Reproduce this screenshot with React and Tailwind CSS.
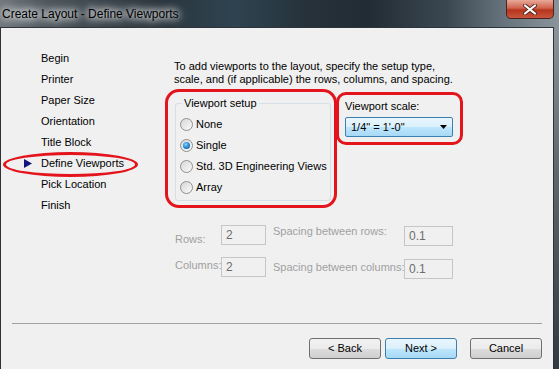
import React from 'react';

const steps = ['Begin', 'Printer', 'Paper Size', 'Orientation', 'Title Block', 'Define Viewports', 'Pick Location', 'Finish'];
const setups = ['None', 'Single', 'Std. 3D Engineering Views', 'Array'];

const Radio = ({ label, checked }) => (
  <div className="flex h-[21px] items-center whitespace-nowrap">
    <div className="flex h-[13px] w-[13px] shrink-0 items-center justify-center rounded-full border border-[#8e8f8f] bg-gradient-to-br from-[#d6d6d6] to-[#fbfbfb]">
      {checked && (
        <div className="h-[7px] w-[7px] rounded-full bg-[radial-gradient(circle_at_40%_35%,#8fd3ff_0%,#2a8fd6_45%,#0b4f8e_100%)]" />
      )}
    </div>
    <span className="ml-[3px]">{label}</span>
  </div>
);

const Field = ({ value, w, className = '' }) => (
  <div className={`flex h-[20px] shrink-0 items-center border border-[#c3c7ca] bg-[#f0f0f0] pl-[4px] text-[12px] text-[#6d6d6d] ${w} ${className}`}>
    {value}
  </div>
);

const WinButton = ({ children, primary }) => (
  <button
    className={`h-[21px] w-[72px] rounded-[3px] border text-[11px] text-black ${
      primary
        ? 'border-[#3c7fb1] bg-[linear-gradient(#eaf6fd_0%,#d9f0fc_50%,#bee6fd_51%,#a7d9f5_100%)]'
        : 'border-[#707070] bg-[linear-gradient(#f2f2f2_0%,#ebebeb_50%,#dddddd_51%,#cfcfcf_100%)]'
    }`}
  >
    {children}
  </button>
);

export default function App() {
  return (
    <div className="flex h-[369px] w-[559px] flex-col overflow-hidden bg-[#2b3640] font-['Liberation_Sans',Arial,sans-serif] text-[11px] text-black">
      {/* title bar */}
      <div className="relative flex h-[27px] items-center bg-[linear-gradient(90deg,#6f767c_0%,#4b545b_9%,#2a343c_28%,#2e4450_42%,#26313a_55%,#222c34_66%,#3b4852_80%,#66737c_90%,#8a949b_100%)] pl-[2px]">
        <span className="text-[12px] text-black [text-shadow:0_0_6px_#ffffff,0_0_10px_#ffffff,0_0_14px_#e8eef2]">
          Create Layout - Define Viewports
        </span>
        <div className="absolute left-[506px] top-0 flex h-[19px] w-[48px] items-center justify-center rounded-b-[5px] border border-t-0 border-[#4a2220] bg-[linear-gradient(#e9a99a_0%,#d0634c_45%,#b6341c_55%,#c8553c_100%)]">
          <svg width="14" height="11" viewBox="0 0 14 11">
            <path d="M2 1.5 L12 9.5 M12 1.5 L2 9.5" stroke="#5a2a22" strokeWidth="4" strokeLinecap="round" />
            <path d="M2 1.5 L12 9.5 M12 1.5 L2 9.5" stroke="#ffffff" strokeWidth="2.2" strokeLinecap="round" />
          </svg>
        </div>
      </div>

      <div className="flex flex-1">
        {/* client area */}
        <div className="flex w-[554px] shrink-0 flex-col border border-b-0 border-[#2c333a] bg-[#f0f0f0]">
          <div className="flex">
            {/* steps */}
            <div className="w-[173px] shrink-0 pt-[20px]">
              {steps.map((s) => (
                <div key={s} className="relative flex h-[21px] items-center pl-[23px]">
                  <div className="w-[17px]">
                    {s === 'Define Viewports' && (
                      <svg width="8" height="9" viewBox="0 0 8 9">
                        <path d="M0 0 L8 4.5 L0 9 Z" fill="#14147a" />
                      </svg>
                    )}
                  </div>
                  <span>{s}</span>
                  {s === 'Define Viewports' && (
                    <div className="absolute left-[2px] top-[-1px] h-[25px] w-[135px] rounded-[50%] border-[3px] border-[#e3141c]" />
                  )}
                </div>
              ))}
            </div>

            {/* main */}
            <div className="min-w-0 flex-1 pt-[32px]">
              <p className="whitespace-nowrap leading-[13px]">
                To add viewports to the layout, specify the setup type,
                <br />
                scale, and (if applicable) the rows, columns, and spacing.
              </p>

              <div className="mt-[11px] flex items-start">
                <div className="relative ml-[1px] shrink-0">
                  <fieldset className="w-[156px] min-w-0 rounded-[3px] border border-[#d5dfe5] px-[4px] pb-[2px] pt-0">
                    <legend className="ml-[2px] px-[2px] leading-[13px]">Viewport setup</legend>
                    <div className="pt-[4px]">
                      {setups.map((s) => (
                        <Radio key={s} label={s} checked={s === 'Single'} />
                      ))}
                    </div>
                  </fieldset>
                  <div className="absolute left-[-10px] top-[-8px] h-[119px] w-[172px] rounded-[14px] border-[3px] border-[#e3141c]" />
                </div>

                <div className="relative ml-[14px] mt-[3px] shrink-0">
                  <div className="leading-[13px]">Viewport scale:</div>
                  <div className="mt-[4px] flex h-[20px] w-[108px] items-center justify-between rounded-[2px] border border-[#3c7fb1] bg-[linear-gradient(#eaf6fd_0%,#d9f0fc_50%,#bee6fd_51%,#a7d9f5_100%)] pl-[5px] pr-[5px]">
                    <span>1/4" = 1'-0"</span>
                    <svg width="7" height="4" viewBox="0 0 7 4">
                      <path d="M0 0 L7 0 L3.5 4 Z" fill="#000" />
                    </svg>
                  </div>
                  <div className="absolute left-[-9px] top-[-8px] h-[53px] w-[127px] rounded-[10px] border-[3px] border-[#e3141c]" />
                </div>
              </div>

              {/* rows / columns */}
              <div className="ml-[1px] mt-[24px] whitespace-nowrap text-[#a0a0a0]">
                <div className="flex items-start">
                  <span className="mt-[8px] w-[46px] shrink-0 leading-[13px]">Rows:</span>
                  <Field value="2" w="w-[45px]" />
                  <span className="ml-[7px] w-[131px] shrink-0 leading-[13px]">Spacing between rows:</span>
                  <Field value="0.1" w="w-[49px]" className="mt-[1px]" />
                </div>
                <div className="mt-[11px] flex items-start">
                  <span className="mt-[2px] w-[46px] shrink-0 leading-[13px]">Columns:</span>
                  <Field value="2" w="w-[45px]" />
                  <span className="ml-[7px] mt-[4px] w-[131px] shrink-0 leading-[13px]">Spacing between columns:</span>
                  <Field value="0.1" w="w-[49px]" className="mt-[2px]" />
                </div>
              </div>
            </div>
          </div>

          {/* footer */}
          <div className="mt-auto pb-[10px]">
            <div className="mx-[11px] h-px bg-[#a0a0a0]" />
            <div className="mt-[14px] flex justify-end pr-[11px]">
              <WinButton>&lt; Back</WinButton>
              <div className="ml-[4px]">
                <WinButton primary>Next &gt;</WinButton>
              </div>
              <div className="ml-[13px]">
                <WinButton>Cancel</WinButton>
              </div>
            </div>
          </div>
        </div>
        {/* right frame */}
        <div className="flex-1 bg-[linear-gradient(#8a949b_0%,#5f6a72_40%,#2f3a44_100%)]" />
      </div>
    </div>
  );
}
